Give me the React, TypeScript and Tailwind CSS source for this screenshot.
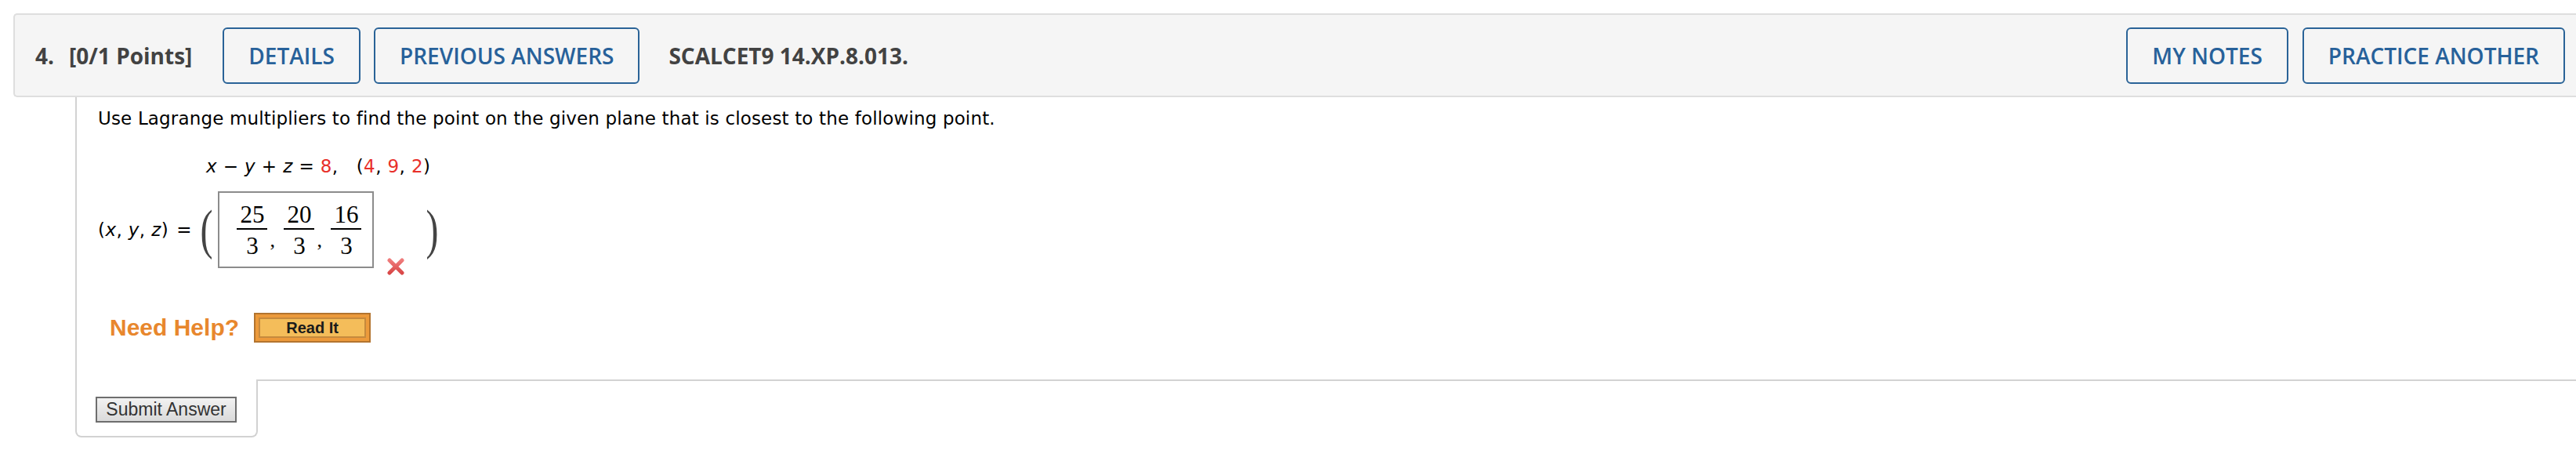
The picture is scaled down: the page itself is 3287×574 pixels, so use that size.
import React from 'react';

function HeaderButton({ children, className = '' }: { children: React.ReactNode; className?: string }) {
  return (
    <button
      className={`h-[72px] rounded-[6px] border-2 border-[#2a6397] px-[31px] text-[28px] font-semibold leading-none text-[#27619a] ${className}`}
    >
      {children}
    </button>
  );
}

function Frac({ n, d }: { n: string; d: string }) {
  return (
    <span className="inline-flex w-[39px] flex-col items-center">
      <span className="pb-[2px] leading-none">{n}</span>
      <span className="h-[2px] w-full bg-black" />
      <span className="pt-[5px] leading-none">{d}</span>
    </span>
  );
}

function Comma() {
  return <span className="mt-[28px] w-[21px] pl-[3px] text-[26px] leading-none">,</span>;
}

function RedX() {
  return (
    <svg width="24" height="24" viewBox="0 0 24 24" className="-mb-[10px] ml-[16px] self-end">
      <defs>
        <linearGradient id="xg" x1="0" y1="0" x2="0" y2="1">
          <stop offset="0" stopColor="#ef7b7b" />
          <stop offset="1" stopColor="#d94848" />
        </linearGradient>
      </defs>
      <path d="M4 4 L20 20 M20 4 L4 20" stroke="url(#xg)" strokeWidth="5" strokeLinecap="round" />
    </svg>
  );
}

export default function App() {
  return (
    <div className="min-h-screen bg-white pt-[17px] font-['DejaVu_Sans',sans-serif] text-black">
      {/* Question header */}
      <div className="ml-[17px] flex h-[107px] items-center rounded-l-[5px] border-y-2 border-l-2 border-[#dedede] bg-[#f5f5f5] pl-[26px] pr-[14px] font-['Open_Sans',sans-serif]">
        <span className="text-[28px] font-bold text-[#424242]">4.</span>
        <span className="ml-[19px] text-[28px] font-bold text-[#424242]">[0/1 Points]</span>
        <HeaderButton className="ml-[39px]">DETAILS</HeaderButton>
        <HeaderButton className="ml-[17px]">PREVIOUS ANSWERS</HeaderButton>
        <span className="ml-[37px] text-[28px] font-bold text-[#424242]">SCALCET9 14.XP.8.013.</span>
        <HeaderButton className="ml-auto">MY NOTES</HeaderButton>
        <HeaderButton className="ml-[18px]">PRACTICE ANOTHER</HeaderButton>
      </div>

      {/* Question body */}
      <div className="ml-[96px] border-l-2 border-[#d2d2d2] pb-[47px] pl-[27px] pt-[14px]">
        <p className="text-[23px] leading-[26px] tracking-[0.15px]">
          Use Lagrange multipliers to find the point on the given plane that is closest to the following point.
        </p>

        <div className="ml-[138px] mt-[35px] text-[23px] leading-[26px] tracking-[0.4px]">
          <i>x</i> − <i>y</i> + <i>z</i> = <span className="text-[#e8302a]">8</span>,{'\u00a0\u00a0\u00a0'}(
          <span className="text-[#e8302a]">4</span>, <span className="text-[#e8302a]">9</span>,{' '}
          <span className="text-[#e8302a]">2</span>)
        </div>

        <div className="mt-[19px] flex items-center">
          <span className="text-[23px] leading-[26px] tracking-[0.4px]">
            (<i>x</i>, <i>y</i>, <i>z</i>)
          </span>
          <span className="ml-[10px] text-[23px] leading-[26px]">=</span>
          <span className="ml-[11px] inline-block scale-y-[1.45] font-['Liberation_Serif',serif] text-[48px] leading-none text-[#444]">
            (
          </span>
          <div className="ml-[7px] flex h-[98px] w-[199px] items-center border-2 border-[#8c8c8c] pl-[22px] font-['Liberation_Serif',serif] text-[31px]">
            <Frac n="25" d="3" />
            <Comma />
            <Frac n="20" d="3" />
            <Comma />
            <Frac n="16" d="3" />
          </div>
          <RedX />
          <span className="ml-[26px] inline-block scale-y-[1.45] font-['Liberation_Serif',serif] text-[48px] leading-none text-[#444]">
            )
          </span>
        </div>

        <div className="ml-[15px] mt-[57px] flex items-center font-['Liberation_Sans',Arial,sans-serif]">
          <span className="text-[30px] font-bold leading-none text-[#e8872d]">Need Help?</span>
          <div className="ml-[19px] flex h-[38px] w-[149px] items-center justify-center border-2 border-[#b3742f] bg-[#ec9a3b] p-[4px]">
            <div className="flex h-full w-full items-center justify-center border-2 border-[#c68a3d] bg-[#f4bd5a] text-[20px] font-bold text-[#1b1b1b]">
              Read It
            </div>
          </div>
        </div>
      </div>

      {/* Submit tab */}
      <div className="flex">
        <div className="ml-[96px] w-[233px] rounded-b-[8px] border-x-2 border-b-2 border-[#d2d2d2] pb-[17px] pl-[24px] pt-[22px]">
          <button className="flex h-[33px] w-[180px] items-center justify-center border-2 border-[#6e6e6e] bg-gradient-to-b from-[#f2f2f2] to-[#dadada] font-['Liberation_Sans',Arial,sans-serif] text-[23px] leading-none text-[#333]">
            Submit Answer
          </button>
        </div>
        <div className="-ml-[2px] flex-1 border-t-2 border-[#d2d2d2]" />
      </div>
    </div>
  );
}
